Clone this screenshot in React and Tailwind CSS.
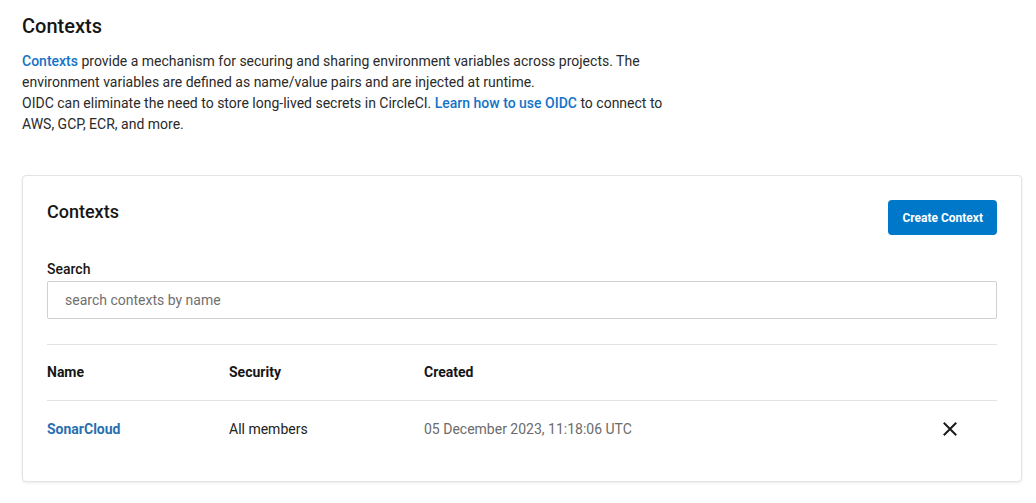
import React from "react";

const contexts = [
  { name: "SonarCloud", security: "All members", created: "05 December 2023, 11:18:06 UTC" },
];

function CloseIcon() {
  return (
    <svg width="14" height="14" viewBox="0 0 14 14" fill="none" stroke="#1a1a1a" strokeWidth="2" strokeLinecap="square">
      <path d="M1.5 1.5 L12.5 12.5 M12.5 1.5 L1.5 12.5" />
    </svg>
  );
}

export default function App() {
  return (
    <div className="min-h-screen bg-white pl-[22px] pr-[14px] pt-[12px] text-[#161616]" style={{ fontFamily: "Roboto, 'Liberation Sans', sans-serif" }}>
      {/* page intro */}
      <h1 className="text-[20px] font-medium leading-[28px]">Contexts</h1>
      <div className="mt-[11px] w-[650px] text-[14px] leading-[21px] text-[#2a2a2a]">
        <p>
          <a href="#" className="font-medium text-[#1473c7]">Contexts</a> provide a mechanism for securing and sharing environment
          variables across projects. The environment variables are defined as name/value pairs and are injected at runtime.
        </p>
        <p>
          OIDC can eliminate the need to store long-lived secrets in CircleCI.{" "}
          <a href="#" className="font-medium text-[#1473c7]">Learn how to use OIDC</a> to connect to AWS, GCP, ECR, and more.
        </p>
      </div>

      {/* contexts card */}
      <div className="mt-[40px] rounded-[4px] border border-[#e3e3e3] bg-white px-[24px] pb-[24px] pt-[24px] shadow-[0_1px_3px_rgba(0,0,0,0.08)]">
        <div className="flex items-start justify-between">
          <h2 className="text-[18px] font-medium leading-[24px]">Contexts</h2>
          <button className="h-[35px] rounded-[4px] bg-[#0078ca] px-[14px] text-[12px] font-bold text-white">
            Create Context
          </button>
        </div>

        <label className="mt-[24px] block text-[14px] font-medium leading-[20px]">Search</label>
        <input
          type="text"
          placeholder="search contexts by name"
          className="mt-[2px] h-[38px] w-full rounded-[2px] border border-[#d0d0d0] px-[17px] text-[14px] outline-none placeholder:text-[#707070]"
        />

        <div className="mt-[25px] border-t border-[#e2e2e2]">
          <div className="flex h-[56px] items-center border-b border-[#e2e2e2] text-[14px] font-bold">
            <div className="w-[182px]">Name</div>
            <div className="w-[195px]">Security</div>
            <div className="flex-1">Created</div>
          </div>
          {contexts.map((c) => (
            <div key={c.name} className="flex h-[56px] items-center text-[14px]">
              <a href="#" className="w-[182px] font-bold text-[#2a6fb0]">{c.name}</a>
              <div className="w-[195px] text-[#222]">{c.security}</div>
              <div className="flex-1 text-[#6b6b6b]">{c.created}</div>
              <button className="mr-[37px] flex h-[20px] w-[20px] items-center justify-center" aria-label="Remove context">
                <CloseIcon />
              </button>
            </div>
          ))}
        </div>
      </div>
    </div>
  );
}
